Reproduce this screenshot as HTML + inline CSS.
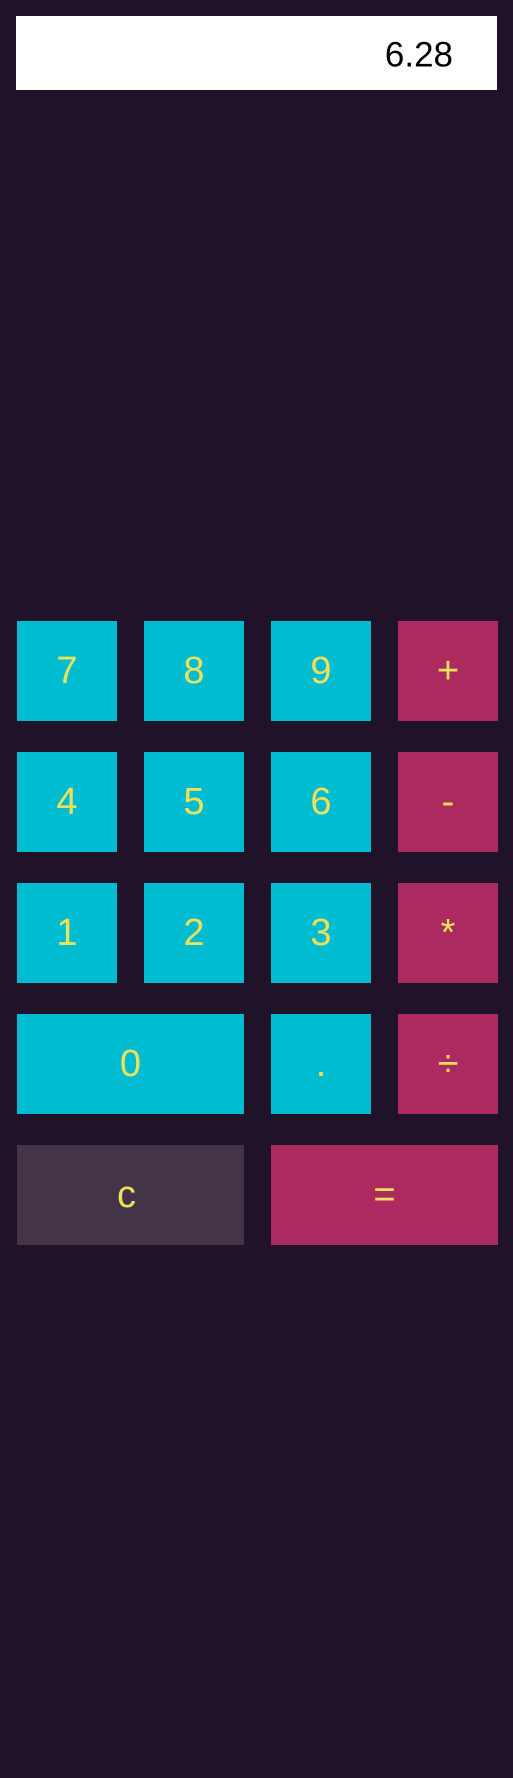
<!DOCTYPE html>
<html><head><meta charset="utf-8"><style>
html,body{margin:0;padding:0;background:#201229;width:513px;height:1778px;overflow:hidden;font-family:"Liberation Sans",sans-serif}
.disp{position:absolute;left:16px;top:16px;width:481px;height:74px;background:#fff}
.disp span{position:absolute;right:44px;top:50%;transform:translateY(-45%);font-size:35px;color:#000;line-height:1}
.b{position:absolute;width:100px;height:100px;display:flex;align-items:center;justify-content:center;color:#ede05a;font-size:38px;line-height:1}
.c{background:#00bcd0}.m{background:#ad2a61}.g{background:#433448}.w{width:227px}
</style></head><body>
<div class="disp"><span>6.28</span></div>
<div class="b c" style="left:17px;top:621px">7</div>
<div class="b c" style="left:144px;top:621px">8</div>
<div class="b c" style="left:271px;top:621px">9</div>
<div class="b m" style="left:398px;top:621px">+</div>
<div class="b c" style="left:17px;top:752px">4</div>
<div class="b c" style="left:144px;top:752px">5</div>
<div class="b c" style="left:271px;top:752px">6</div>
<div class="b m" style="left:398px;top:752px">-</div>
<div class="b c" style="left:17px;top:883px">1</div>
<div class="b c" style="left:144px;top:883px">2</div>
<div class="b c" style="left:271px;top:883px">3</div>
<div class="b m" style="left:398px;top:883px">*</div>
<div class="b c w" style="left:17px;top:1014px">0</div>
<div class="b c" style="left:271px;top:1014px">.</div>
<div class="b m" style="left:398px;top:1014px">÷</div>
<div class="b g w" style="left:17px;top:1145px"><span style="margin-right:8px">c</span></div>
<div class="b m w" style="left:271px;top:1145px">=</div>
</body></html>
